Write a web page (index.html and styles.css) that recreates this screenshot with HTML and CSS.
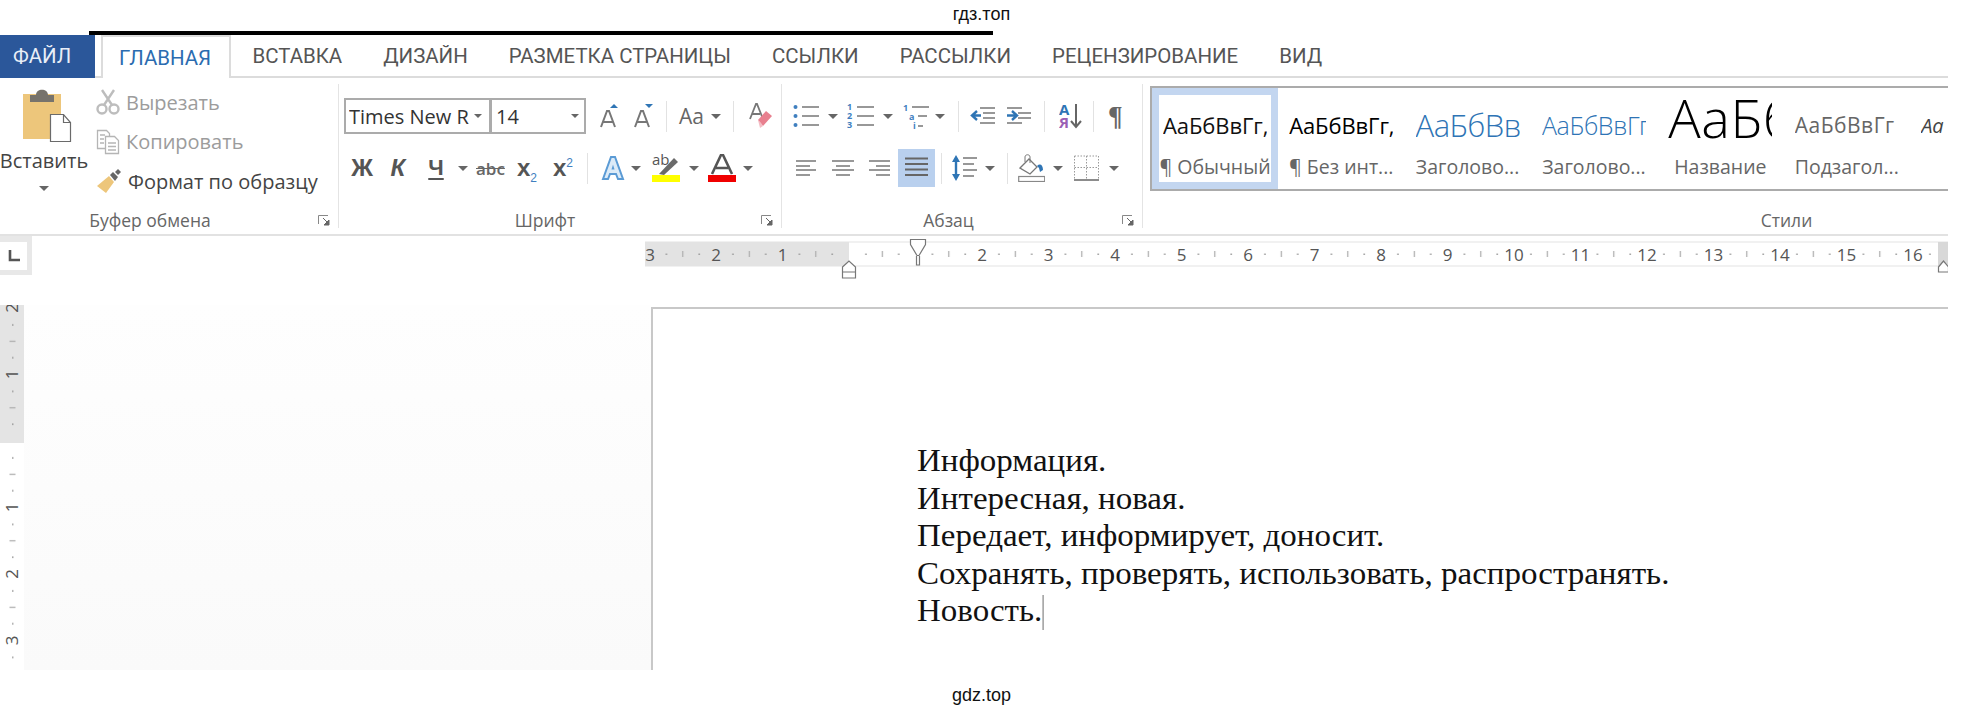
FILE: index.html
```html
<!DOCTYPE html>
<html lang="ru">
<head>
<meta charset="utf-8">
<title>гдз.топ</title>
<link rel="stylesheet" href="styles.css">
</head>
<body>
<div class="watermark top">гдз.топ</div>
<div class="app">
  <div class="blackline"></div>
  <nav class="tabs">
    <div class="tab file">ФАЙЛ</div>
    <div class="tab active">ГЛАВНАЯ</div>
    <div class="tab">ВСТАВКА</div>
    <div class="tab">ДИЗАЙН</div>
    <div class="tab">РАЗМЕТКА СТРАНИЦЫ</div>
    <div class="tab">ССЫЛКИ</div>
    <div class="tab">РАССЫЛКИ</div>
    <div class="tab">РЕЦЕНЗИРОВАНИЕ</div>
    <div class="tab">ВИД</div>
  </nav>

  <div class="ribbon">
    <section class="group g-clip">
      <div class="clip-body">
        <div class="paste">
          <svg class="paste-icon" width="50" height="55" viewBox="0 0 50 55">
            <rect x="1" y="6" width="38" height="45" fill="#edc67b"/>
            <path d="M8 14V7h6c0-7 12-7 12 0h6v7z" fill="#77736c"/>
            <path d="M28.500 26.500h13l7 8v19h-20z" fill="#fff" stroke="#6a6a6a" stroke-width="1.200"/>
            <path d="M41.500 26.500v8h7" fill="none" stroke="#6a6a6a" stroke-width="1.200"/>
          </svg>
          <span class="paste-label">Вставить</span>
          <i class="caret paste-caret"></i>
        </div>
        <div class="clip-cmds">
          <div class="cmd dim">
            <svg width="24" height="26" viewBox="0 0 24 26"><g fill="none" stroke="#bdbdbd" stroke-width="2.400"><path d="M6 1l10 15M18 1L8 16"/><circle cx="6" cy="20" r="4.500"/><circle cx="18" cy="20" r="4.500"/></g></svg>
            <span>Вырезать</span>
          </div>
          <div class="cmd dim">
            <svg width="24" height="26" viewBox="0 0 24 26"><g fill="#fff" stroke="#b5b5b5" stroke-width="1.300"><path d="M1.500 1.500h9l3 3v15h-12z"/><path d="M9.500 7.500h9l4 4v13h-13z"/><path d="M4 6h5M4 10h4M4 14h4M12 14h8M12 17.500h8M12 21h8"/></g></svg>
            <span>Копировать</span>
          </div>
          <div class="cmd">
            <svg width="26" height="26" viewBox="0 0 26 26"><path d="M1 18L13 8l5 6-8 11z" fill="#edc67b"/><path d="M14 7l3-3 5 5-3 4z" fill="#666"/><path d="M19 4l3-3 3 3-3 3z" fill="#666"/></svg>
            <span>Формат по образцу</span>
          </div>
        </div>
      </div>
      <div class="group-foot foot-clip"><span class="group-name">Буфер обмена</span><svg class="launcher" width="12" height="11" viewBox="0 0 12 11"><path d="M.5 9V.5H10" fill="none" stroke="#888"/><path d="M5 3l5 5M11 5v5H6z" fill="#666" stroke="#666"/></svg></div>
    </section>

    <section class="group g-font">
      <div class="row row1">
        <div class="fontbox"><span class="fb-name">Times New R</span><i class="caret small"></i></div>
        <div class="sizebox"><span>14</span><i class="caret small"></i></div>
        <svg class="ml12" width="22" height="24" viewBox="0 0 22 24"><path d="M3 23L9 7h2l6 16M5.500 18h9" fill="none" stroke="#777" stroke-width="2"/><path d="M12 4l4-4 4 4z" fill="#2f75b5"/></svg>
        <svg class="ml12" width="22" height="24" viewBox="0 0 22 24"><path d="M3 23L9 7h2l6 16M5.500 18h9" fill="none" stroke="#777" stroke-width="2"/><path d="M13 0l4 4 4-4z" fill="#2f75b5"/></svg>
        <i class="sep ml12"></i>
        <span class="aa ml12">Aa</span>
        <i class="caret ml5"></i>
        <i class="sep ml12"></i>
        <svg class="ml15" width="24" height="26" viewBox="0 0 24 26"><path d="M1 16L7 1h1l6 15M3 11h8" fill="none" stroke="#777" stroke-width="1.800"/><path d="M9 17l8-9 6 5-9 10z" fill="#e8808f"/><path d="M9 17l3 3 2 3-3 2z" fill="#f3bcc4"/></svg>
      </div>
      <div class="row row2">
        <span class="fmt fmt-zh">Ж</span>
        <span class="fmt fmt-k">К</span>
        <span class="fmt fmt-ch">Ч</span>
        <i class="caret ml14"></i>
        <span class="fmt-abc">abc</span>
        <span class="fmt-x x-sub">x<sub>2</sub></span>
        <span class="fmt-x x-sup">x<sup>2</sup></span>
        <i class="sep ml12"></i>
        <svg class="ml13" width="24" height="26" viewBox="0 0 24 26"><path d="M2 24L10 2h4l8 22h-5l-2-5H9l-2 5z" fill="#dcebf8" stroke="#5b9bd5" stroke-width="2"/><path d="M10.500 14.500l1.500-5 1.500 5z" fill="#5b9bd5"/></svg>
        <i class="caret ml6"></i>
        <svg class="ml11" width="28" height="28" viewBox="0 0 28 28"><text x="0" y="11" class="ab">ab</text><path d="M7 20L22 4l4 4-14 13z" fill="#6a6a6a"/><rect y="21" width="28" height="7" fill="#ffff00"/></svg>
        <i class="caret ml9"></i>
        <svg class="ml9" width="28" height="28" viewBox="0 0 28 28"><path d="M4 20L13 1h2l9 19M8 14h12" fill="none" stroke="#555" stroke-width="2.600"/><rect y="21" width="28" height="7" fill="#f00000"/></svg>
        <i class="caret ml7"></i>
      </div>
      <div class="group-foot foot-font"><span class="group-name">Шрифт</span><svg class="launcher" width="12" height="11" viewBox="0 0 12 11"><path d="M.5 9V.5H10" fill="none" stroke="#888"/><path d="M5 3l5 5M11 5v5H6z" fill="#666" stroke="#666"/></svg></div>
    </section>

    <section class="group g-para">
      <div class="row row1">
        <svg class="ml11" width="27" height="24" viewBox="0 0 27 24"><g fill="#3f7fbf"><circle cx="2.500" cy="3" r="2"/><circle cx="2.500" cy="12" r="2"/><circle cx="2.500" cy="21" r="2"/></g><path d="M9 3h17M9 12h17M9 21h17" stroke="#777" stroke-width="1.600"/></svg>
        <i class="caret ml8"></i>
        <svg class="ml9" width="28" height="24" viewBox="0 0 28 24"><g class="num"><text x="0" y="6">1</text><text x="0" y="15">2</text><text x="0" y="24">3</text></g><path d="M10 3h17M10 12h17M10 21h17" stroke="#777" stroke-width="1.600"/></svg>
        <i class="caret ml8"></i>
        <svg class="ml10" width="27" height="25" viewBox="0 0 27 25"><g class="num"><text x="0" y="7">1</text><text x="6" y="16">a</text><text x="10" y="25">i</text></g><path d="M9 3h17M15 12h9M15 22h5" stroke="#777" stroke-width="1.600"/></svg>
        <i class="caret ml5"></i>
        <i class="sep ml13"></i>
        <svg class="ml11" width="26" height="20" viewBox="0 0 26 20"><path d="M10 2h15M13 7h12M13 12h12M10 17h15" stroke="#777" stroke-width="1.600"/><path d="M11 9.500H3M7 5L2 9.500 7 14" fill="none" stroke="#2f75b5" stroke-width="2.400"/></svg>
        <svg class="ml10" width="26" height="20" viewBox="0 0 26 20"><path d="M1 2h15M12 7h13M12 12h13M1 17h15" stroke="#777" stroke-width="1.600"/><path d="M1 9.500h9M6 5l5 4.500L6 14" fill="none" stroke="#2f75b5" stroke-width="2.400"/></svg>
        <i class="sep ml12"></i>
        <svg class="ml14" width="23" height="26" viewBox="0 0 23 26"><text x="0" y="12" class="az a">А</text><text x="0" y="25" class="az z">Я</text><path d="M17 1v23M12 18l5 6 5-6" fill="none" stroke="#666" stroke-width="2"/></svg>
        <i class="sep ml11"></i>
        <span class="pilcrow">¶</span>
      </div>
      <div class="row row2">
        <svg class="ml14" width="20" height="16" viewBox="0 0 20 16"><path d="M0 1h20M0 6h14M0 10h20M0 15h14" stroke="#777" stroke-width="1.700"/></svg>
        <svg class="ml16" width="22" height="16" viewBox="0 0 22 16"><path d="M0 1h22M4 6h14M0 10h22M4 15h14" stroke="#777" stroke-width="1.700"/></svg>
        <svg class="ml15" width="21" height="16" viewBox="0 0 21 16"><path d="M0 1h21M7 6h14M0 10h21M7 15h14" stroke="#777" stroke-width="1.700"/></svg>
        <div class="justify ml8"><svg width="23" height="22" viewBox="0 0 23 22"><path d="M0 1.500h23M0 7h23M0 12.500h23M0 18h23" stroke="#666" stroke-width="1.800"/></svg></div>
        <i class="sep ml6"></i>
        <svg class="ml10" width="25" height="28" viewBox="0 0 25 28"><path d="M4 4v20" stroke="#2f75b5" stroke-width="2.400"/><path d="M0 8l4-7 4 7zM0 20l4 7 4-7z" fill="#2f75b5"/><path d="M11 4h14M11 10h11M11 16h14M11 22h11" stroke="#777" stroke-width="1.700"/></svg>
        <i class="caret ml8"></i>
        <i class="sep ml12"></i>
        <svg class="ml10" width="27" height="28" viewBox="0 0 27 28"><path d="M2 14L11 5l8 8-7 7z" fill="#fff" stroke="#777" stroke-width="1.300"/><path d="M7 8V3c0-3 5-3 5 0v6" fill="none" stroke="#777"/><path d="M19 12c3-3 6-1 6 4l-3 2-1-4z" fill="#2f75b5"/><rect x=".7" y="22.500" width="26" height="5" fill="#fff" stroke="#888" stroke-width="1.200"/></svg>
        <i class="caret ml8"></i>
        <svg class="ml11" width="25" height="26" viewBox="0 0 25 26"><path d="M.5 1h24M.5 12.500h24M12.500 1v24M.5 1v24M24.500 1v24" fill="none" stroke="#999" stroke-dasharray="1.500 1.500"/><path d="M0 25h25" stroke="#666" stroke-width="1.500"/></svg>
        <i class="caret ml10"></i>
      </div>
      <div class="group-foot foot-para"><span class="group-name">Абзац</span><svg class="launcher" width="12" height="11" viewBox="0 0 12 11"><path d="M.5 9V.5H10" fill="none" stroke="#888"/><path d="M5 3l5 5M11 5v5H6z" fill="#666" stroke="#666"/></svg></div>
    </section>

    <section class="group g-styles">
      <div class="gallery">
        <div class="style selected"><div class="sample s-normal">АаБбВвГг,</div><div class="style-name">¶ Обычный</div></div>
        <div class="style"><div class="sample s-nospace">АаБбВвГг,</div><div class="style-name">¶ Без инт...</div></div>
        <div class="style"><div class="sample s-h1">АаБбВвГг</div><div class="style-name">Заголово...</div></div>
        <div class="style"><div class="sample s-h2">АаБбВвГг</div><div class="style-name">Заголово...</div></div>
        <div class="style"><div class="sample s-title">АаБбВ</div><div class="style-name">Название</div></div>
        <div class="style"><div class="sample s-sub">АаБбВвГг</div><div class="style-name">Подзагол...</div></div>
        <div class="style"><div class="sample s-em">Аа</div><div class="style-name">Сла</div></div>
      </div>
      <div class="group-foot foot-styles"><span class="group-name">Стили</span></div>
    </section>
  </div>

  <div class="ruler-row">
    <div class="corner"><div class="corner-in"><svg width="12" height="12" viewBox="0 0 12 12"><path d="M2 0v10h10" fill="none" stroke="#555" stroke-width="2.600"/></svg></div></div>
    <svg class="hruler" width="1303" height="42" viewBox="0 0 1303 42">
      <defs>
        <pattern id="ht" x="4.500" y="4" width="66.500" height="24" patternUnits="userSpaceOnUse">
          <rect x="16.200" y="11.500" width="1.500" height="1.500" fill="#999"/>
          <rect x="32.700" y="9" width="1.200" height="6" fill="#aaa"/>
          <rect x="49" y="11.500" width="1.500" height="1.500" fill="#999"/>
        </pattern>
      </defs>
      <rect y="4" width="1303" height="24" fill="#fff" stroke="#e3e3e3"/>
      <rect y="4" width="204" height="24" fill="#e3e3e3"/>
      <rect y="4" width="1303" height="24" fill="url(#ht)"/>
      <rect x="1293" y="4" width="10" height="24" fill="#d8d8d8"/>
      <g class="rnum" text-anchor="middle">
        <text x="5" y="23">3</text><text x="71" y="23">2</text><text x="137.500" y="23">1</text>
        <text x="337" y="23">2</text><text x="403.500" y="23">3</text><text x="470" y="23">4</text><text x="536.500" y="23">5</text><text x="603" y="23">6</text><text x="669.500" y="23">7</text><text x="736" y="23">8</text><text x="802.500" y="23">9</text><text x="869" y="23">10</text><text x="935.500" y="23">11</text><text x="1002" y="23">12</text><text x="1068.500" y="23">13</text><text x="1135" y="23">14</text><text x="1201.500" y="23">15</text><text x="1268" y="23">16</text>
      </g>
      <path d="M265.500 1.500h15v5l-6.500 11h-2l-6.500-11z M271.500 18v9h3v-9" fill="#fff" stroke="#777" stroke-width="1.200"/>
      <path d="M197.500 29l6.500-6 6.500 6v5h-13zM197.500 34h13v6h-13z" fill="#fff" stroke="#777" stroke-width="1.200"/>
      <path d="M1293.500 29l5-6 5 6v5h-10z" fill="#fff" stroke="#777" stroke-width="1.200"/>
    </svg>
  </div>

  <div class="workspace">
    <svg class="vruler" width="24" height="365" viewBox="0 0 24 365">
      <defs>
        <pattern id="vt" x="0" y="3" width="24" height="66.500" patternUnits="userSpaceOnUse">
          <rect x="12" y="16.200" width="1.500" height="1.500" fill="#999"/>
          <rect x="9.500" y="32.700" width="6" height="1.200" fill="#aaa"/>
          <rect x="12" y="49" width="1.500" height="1.500" fill="#999"/>
        </pattern>
      </defs>
      <rect width="24" height="365" fill="#fff"/>
      <rect width="24" height="138" fill="#e4e4e4"/>
      <rect width="24" height="365" fill="url(#vt)"/>
      <g class="rnum" text-anchor="middle">
        <text transform="translate(18 3) rotate(-90)">2</text>
        <text transform="translate(18 69.500) rotate(-90)">1</text>
        <text transform="translate(18 202.500) rotate(-90)">1</text>
        <text transform="translate(18 269) rotate(-90)">2</text>
        <text transform="translate(18 335.500) rotate(-90)">3</text>
      </g>
    </svg>
    <div class="gutter"></div>
    <div class="page">
      <p>Информация.</p>
      <p>Интересная, новая.</p>
      <p>Передает, информирует, доносит.</p>
      <p>Сохранять, проверять, использовать, распространять.</p>
      <p>Новость.<span class="cursor"></span></p>
    </div>
  </div>
</div>
<div class="watermark bottom">gdz.top</div>
</body>
</html>
```
FILE: styles.css
```css
* { box-sizing: border-box; }
html, body { margin: 0; padding: 0; height: 714px; overflow: hidden; background: #fff; }
body { font-family: "Open Sans", "Noto Sans", sans-serif; color: #444; }

.watermark { font-family: "Liberation Sans", Arial, sans-serif; font-size: 18px; color: #111; text-align: center; width: 1963px; }
.watermark.top { height: 31px; line-height: 28px; }
.watermark.bottom { height: 44px; line-height: 50px; }

.app { width: 1948px; height: 639px; overflow: hidden; }
.blackline { width: 904px; height: 4px; margin-left: 89px; background: #000; }

.tabs { display: flex; height: 43px; border-bottom: 2px solid #dcdcdc; }
.tab { font-family: Roboto, sans-serif; font-size: 20.450px; line-height: 42px; color: #555; padding: 0 20.500px; white-space: nowrap; }
.tab.file { width: 95px; height: 43px; padding: 0 0 0 13px; background: #2b579a; color: #e8eef7; margin-right: 6px; }
.tab.active { width: 130px; height: 43px; padding: 0 0 0 16px; color: #2b6cb0; background: #fff; border: 2px solid #dcdcdc; border-bottom: 0; }
.tab.active + .tab { margin-left: 1px; }

.ribbon { display: flex; height: 158px; padding-top: 6px; border-bottom: 2px solid #e2e2e2; }
.group { height: 144px; display: flex; flex-direction: column; border-right: 1px solid #e4e4e4; flex: none; }
.g-clip { width: 339px; }
.g-font { width: 443px; }
.g-para { width: 361px; }
.g-styles { flex: 1; border-right: 0; min-width: 0; }

.group-foot { margin-top: auto; height: 16px; display: flex; align-items: center; font-size: 17.500px; color: #666; line-height: 20px; }
.group-name { flex: 1; text-align: center; }
.launcher { flex: none; margin-right: 8px; }
.foot-clip .launcher { margin-left: 18px; }
.foot-font .launcher { margin-left: 10px; }
.foot-para .launcher { margin-left: 7px; }
.foot-styles { padding-left: 482px; }

.clip-body { display: flex; }
.paste { width: 86px; margin-left: 1px; display: flex; flex-direction: column; align-items: center; padding-top: 4px; }
.paste-icon { margin-left: 5px; flex: none; }
.paste-label { font-size: 20px; line-height: 20px; margin-top: 8px; white-space: nowrap; }
.paste-caret { margin-top: 15px; }
.clip-cmds { margin-left: 9px; display: flex; flex-direction: column; gap: 3.500px; }
.cmd { display: flex; align-items: center; height: 36px; width: 240px; font-size: 20px; color: #444; white-space: nowrap; }
.cmd svg { flex: none; margin-right: 6px; }
.cmd.dim { color: #9c9c9c; }

.row { display: flex; align-items: center; flex: none; }
.row1 { height: 36px; margin-top: 14px; }
.row2 { height: 38px; margin-top: 15px; }

.g-font .row1 { padding-left: 5px; }
.g-font .row2 { padding-left: 6px; }
.fontbox, .sizebox { height: 36px; border: 2px solid #ababab; display: flex; align-items: center; font-size: 20px; color: #333; white-space: nowrap; }
.fontbox { width: 147px; padding-left: 3px; }
.fb-name { width: 125px; overflow: hidden; }
.sizebox { width: 96px; margin-left: -1px; padding-left: 4px; justify-content: space-between; padding-right: 5px; }
.caret { display: block; flex: none; width: 0; height: 0; border-left: 5px solid transparent; border-right: 5px solid transparent; border-top: 5px solid #666; }
.caret.small { border-left-width: 4px; border-right-width: 4px; border-top-width: 4px; }

.sep { display: block; flex: none; width: 1px; height: 31px; background: #e2e2e2; }
.ml5 { margin-left: 5px; } .ml6 { margin-left: 6px; } .ml7 { margin-left: 7px; } .ml8 { margin-left: 8px; }
.ml9 { margin-left: 9px; } .ml10 { margin-left: 10px; } .ml11 { margin-left: 11px; } .ml12 { margin-left: 12px; }
.ml13 { margin-left: 13px; } .ml14 { margin-left: 14px; } .ml15 { margin-left: 15px; } .ml16 { margin-left: 16px; }

.aa { font-size: 21px; color: #666; width: 27px; }
.fmt { font-weight: 700; color: #555; font-size: 24px; line-height: 28px; text-align: center; flex: none; }
.fmt-zh { width: 24px; margin-left: 5px; font-family: "Liberation Sans", sans-serif; }
.fmt-k { width: 16px; margin-left: 16px; font-style: italic; font-family: "Liberation Sans", sans-serif; }
.fmt-ch { width: 16px; margin-left: 22px; font-family: "Liberation Sans", sans-serif; font-size: 22px; text-decoration: underline; text-underline-offset: 3px; }
.fmt-abc { width: 30px; margin-left: 8px; font-size: 17px; font-weight: 600; color: #666; text-decoration: line-through; flex: none; }
.fmt-x { flex: none; font-family: "Liberation Sans", sans-serif; font-weight: 700; font-size: 24px; color: #555; line-height: 28px; white-space: nowrap; }
.fmt-x sub, .fmt-x sup { font-size: 12px; font-weight: 400; color: #3f7fbf; line-height: 0; }
.x-sub { width: 22px; margin-left: 11px; }
.x-sup { width: 22px; margin-left: 14px; }
.ab { font: 400 15px "Open Sans", sans-serif; fill: #555; }
.num text { font: 700 9px "Open Sans", sans-serif; fill: #3f7fbf; }
.az { font: 700 15px "Open Sans", sans-serif; }
.az.a { fill: #2f75b5; }
.az.z { fill: #9a5fb4; }
.pilcrow { margin-left: 14px; width: 18px; font-size: 27px; line-height: 30px; color: #666; font-family: "Liberation Serif", serif; font-weight: 700; }
.justify { width: 37px; height: 38px; background: #b9d0ee; display: flex; align-items: center; justify-content: center; flex: none; }

.gallery { margin: 2px 0 0 7px; height: 105px; display: flex; border: 2px solid #ababab; border-right: 0; overflow: hidden; }
.style { flex: none; width: 126.400px; height: 101px; display: flex; flex-direction: column; align-items: center; border: 7px solid transparent; }
.style.selected { border-color: #c3d6f0; width: 126px; }
.sample { width: 104px; height: 60px; flex: none; overflow: hidden; white-space: nowrap; display: flex; align-items: center; color: #111; }
.style-name { font-size: 19.500px; line-height: 24px; color: #666; white-space: nowrap; }
.s-normal, .s-nospace { font-size: 22px; letter-spacing: -.100px; }
.s-nospace { color: #000; }
.s-h1 { font-size: 31px; font-weight: 300; color: #2e74b5; letter-spacing: -.500px; }
.s-h2 { font-size: 25px; font-weight: 300; color: #2e74b5; letter-spacing: -.400px; }
.s-title { font-size: 54px; font-weight: 300; color: #000; padding-bottom: 16px; letter-spacing: .500px; }
.s-sub { font-size: 21px; color: #666; letter-spacing: .500px; }
.s-em { font-size: 20px; font-style: italic; color: #444; }

.ruler-row { display: flex; height: 69px; }
.corner { width: 32px; height: 39px; background: #e8e8e8; padding-top: 6px; flex: none; }
.corner-in { width: 27px; height: 28px; background: #fff; display: flex; align-items: center; justify-content: center; }
.hruler { margin: 2px 0 0 613px; display: block; flex: none; }
.rnum text { font: 400 17px "Open Sans", sans-serif; fill: #555; }

.workspace { display: flex; height: 365px; }
.vruler { display: block; flex: none; }
.gutter { width: 627px; background: linear-gradient(#fefefe, #fafafa); flex: none; }
.page { flex: 1; margin-top: 2px; border-left: 2px solid #c8c8c8; border-top: 2px solid #c8c8c8; padding: 133px 0 0 264px; font-family: "Liberation Serif", "Times New Roman", serif; font-size: 31px; line-height: 37.500px; color: #111; }
.page p { margin: 0; white-space: nowrap; transform: scaleX(1.064); transform-origin: left center; }
.cursor { display: inline-block; width: 1px; height: 35px; background: #777; vertical-align: -9px; margin-left: 0; }
```
